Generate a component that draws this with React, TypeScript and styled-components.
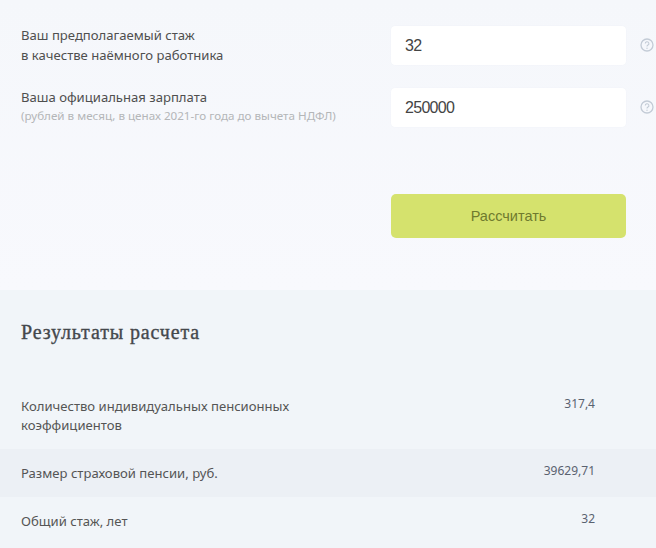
import React from "react";
import styled, { createGlobalStyle } from "styled-components";

const Global = createGlobalStyle`
  html, body { margin: 0; padding: 0; background: #f7f8fc; }
  body { width: 656px; height: 548px; overflow: hidden; font-family: "Noto Sans", "Liberation Sans", sans-serif; }
`;

const Page = styled.div`
  width: 656px;
  height: 548px;
  overflow: hidden;
  display: flex;
  flex-direction: column;
`;

const Form = styled.section`
  height: 290px;
  flex: none;
  box-sizing: border-box;
  padding: 26px 0 0 21px;
  background: linear-gradient(#f5f7fb, #f8f9fd);
  display: flex;
  flex-direction: column;
`;

const FieldRow = styled.div`
  display: grid;
  grid-template-columns: 370px 235px 29px;
  align-items: start;
  height: 39px;
  margin-bottom: 23px;
`;

const LabelBox = styled.div`
  padding-top: 0;
`;

const LabelLine = styled.div`
  font-size: 13.1px;
  line-height: 19px;
  color: #4f4f4f;
  white-space: nowrap;
  & + & {
    margin-top: 1px;
  }
`;

const Hint = styled.div`
  font-size: 11.65px;
  line-height: 17px;
  color: #b4b6b8;
  white-space: nowrap;
`;

const Input = styled.div`
  height: 39px;
  box-sizing: border-box;
  padding-left: 14px;
  background: #fff;
  border-radius: 4px;
  box-shadow: 0 0 1px rgba(215, 220, 235, 0.4);
  font-family: "Liberation Sans", Arial, sans-serif;
  font-size: 16px;
  letter-spacing: -0.7px;
  line-height: 39px;
  color: #444;
`;

const Help = styled.div`
  display: flex;
  justify-content: flex-end;
  padding: 12px 1px 0 0;
  color: #c3cbd6;
`;

const ButtonRow = styled.div`
  margin-top: 44px;
  padding-left: 370px;
`;

const Button = styled.div`
  width: 235px;
  height: 44px;
  background: #d5e26d;
  border-radius: 5px;
  display: flex;
  align-items: center;
  justify-content: center;
  font-family: "Liberation Sans", Arial, sans-serif;
  font-size: 14.5px;
  color: #6f7a2e;
`;

const Results = styled.section`
  flex: 1;
  background: #f1f5f9;
`;

const Title = styled.h2`
  margin: 0;
  padding: 30px 21px 0;
  height: 92px;
  box-sizing: border-box;
  font-family: "Liberation Serif", "DejaVu Serif", serif;
  font-size: 20px;
  line-height: 24px;
  font-weight: 400;
  letter-spacing: 0.86px;
  -webkit-text-stroke: 0.35px #44484c;
  color: #44484c;
`;

const Row = styled.div<{ $shaded?: boolean }>`
  display: flex;
  justify-content: space-between;
  align-items: flex-start;
  padding: 15px 61px 14px 21px;
  background: ${(p) => (p.$shaded ? "#ecf0f5" : "transparent")};
`;

const RowLabel = styled.div`
  width: 290px;
  font-size: 13.1px;
  line-height: 19px;
  color: #555;
`;

const RowValue = styled.div`
  margin-top: -1px;
  font-size: 12px;
  line-height: 16px;
  color: #5a6270;
`;

const HelpIcon = () => (
  <svg width="14" height="14" viewBox="0 0 14 14" fill="none" stroke="currentColor">
    <circle cx="7" cy="7" r="6" strokeWidth="1.3" />
    <path d="M5.3 5.6a1.8 1.8 0 1 1 2.7 1.5c-.7.4-1 .7-1 1.5" strokeWidth="1.1" />
    <circle cx="7" cy="10.2" r=".7" fill="currentColor" stroke="none" />
  </svg>
);

const rows = [
  { label: "Количество индивидуальных пенсионных коэффициентов", value: "317,4" },
  { label: "Размер страховой пенсии, руб.", value: "39629,71", shaded: true },
  { label: "Общий стаж, лет", value: "32" },
];

export default function App() {
  return (
    <Page>
      <Global />
      <Form>
        <FieldRow>
          <LabelBox>
            <LabelLine>Ваш предполагаемый стаж</LabelLine>
            <LabelLine>в качестве наёмного работника</LabelLine>
          </LabelBox>
          <Input>32</Input>
          <Help><HelpIcon /></Help>
        </FieldRow>
        <FieldRow>
          <LabelBox>
            <LabelLine>Ваша официальная зарплата</LabelLine>
            <Hint>(рублей в месяц, в ценах 2021-го года до вычета НДФЛ)</Hint>
          </LabelBox>
          <Input>250000</Input>
          <Help><HelpIcon /></Help>
        </FieldRow>
        <ButtonRow>
          <Button>Рассчитать</Button>
        </ButtonRow>
      </Form>
      <Results>
        <Title>Результаты расчета</Title>
        {rows.map((r) => (
          <Row key={r.label} $shaded={r.shaded}>
            <RowLabel>{r.label}</RowLabel>
            <RowValue>{r.value}</RowValue>
          </Row>
        ))}
      </Results>
    </Page>
  );
}
